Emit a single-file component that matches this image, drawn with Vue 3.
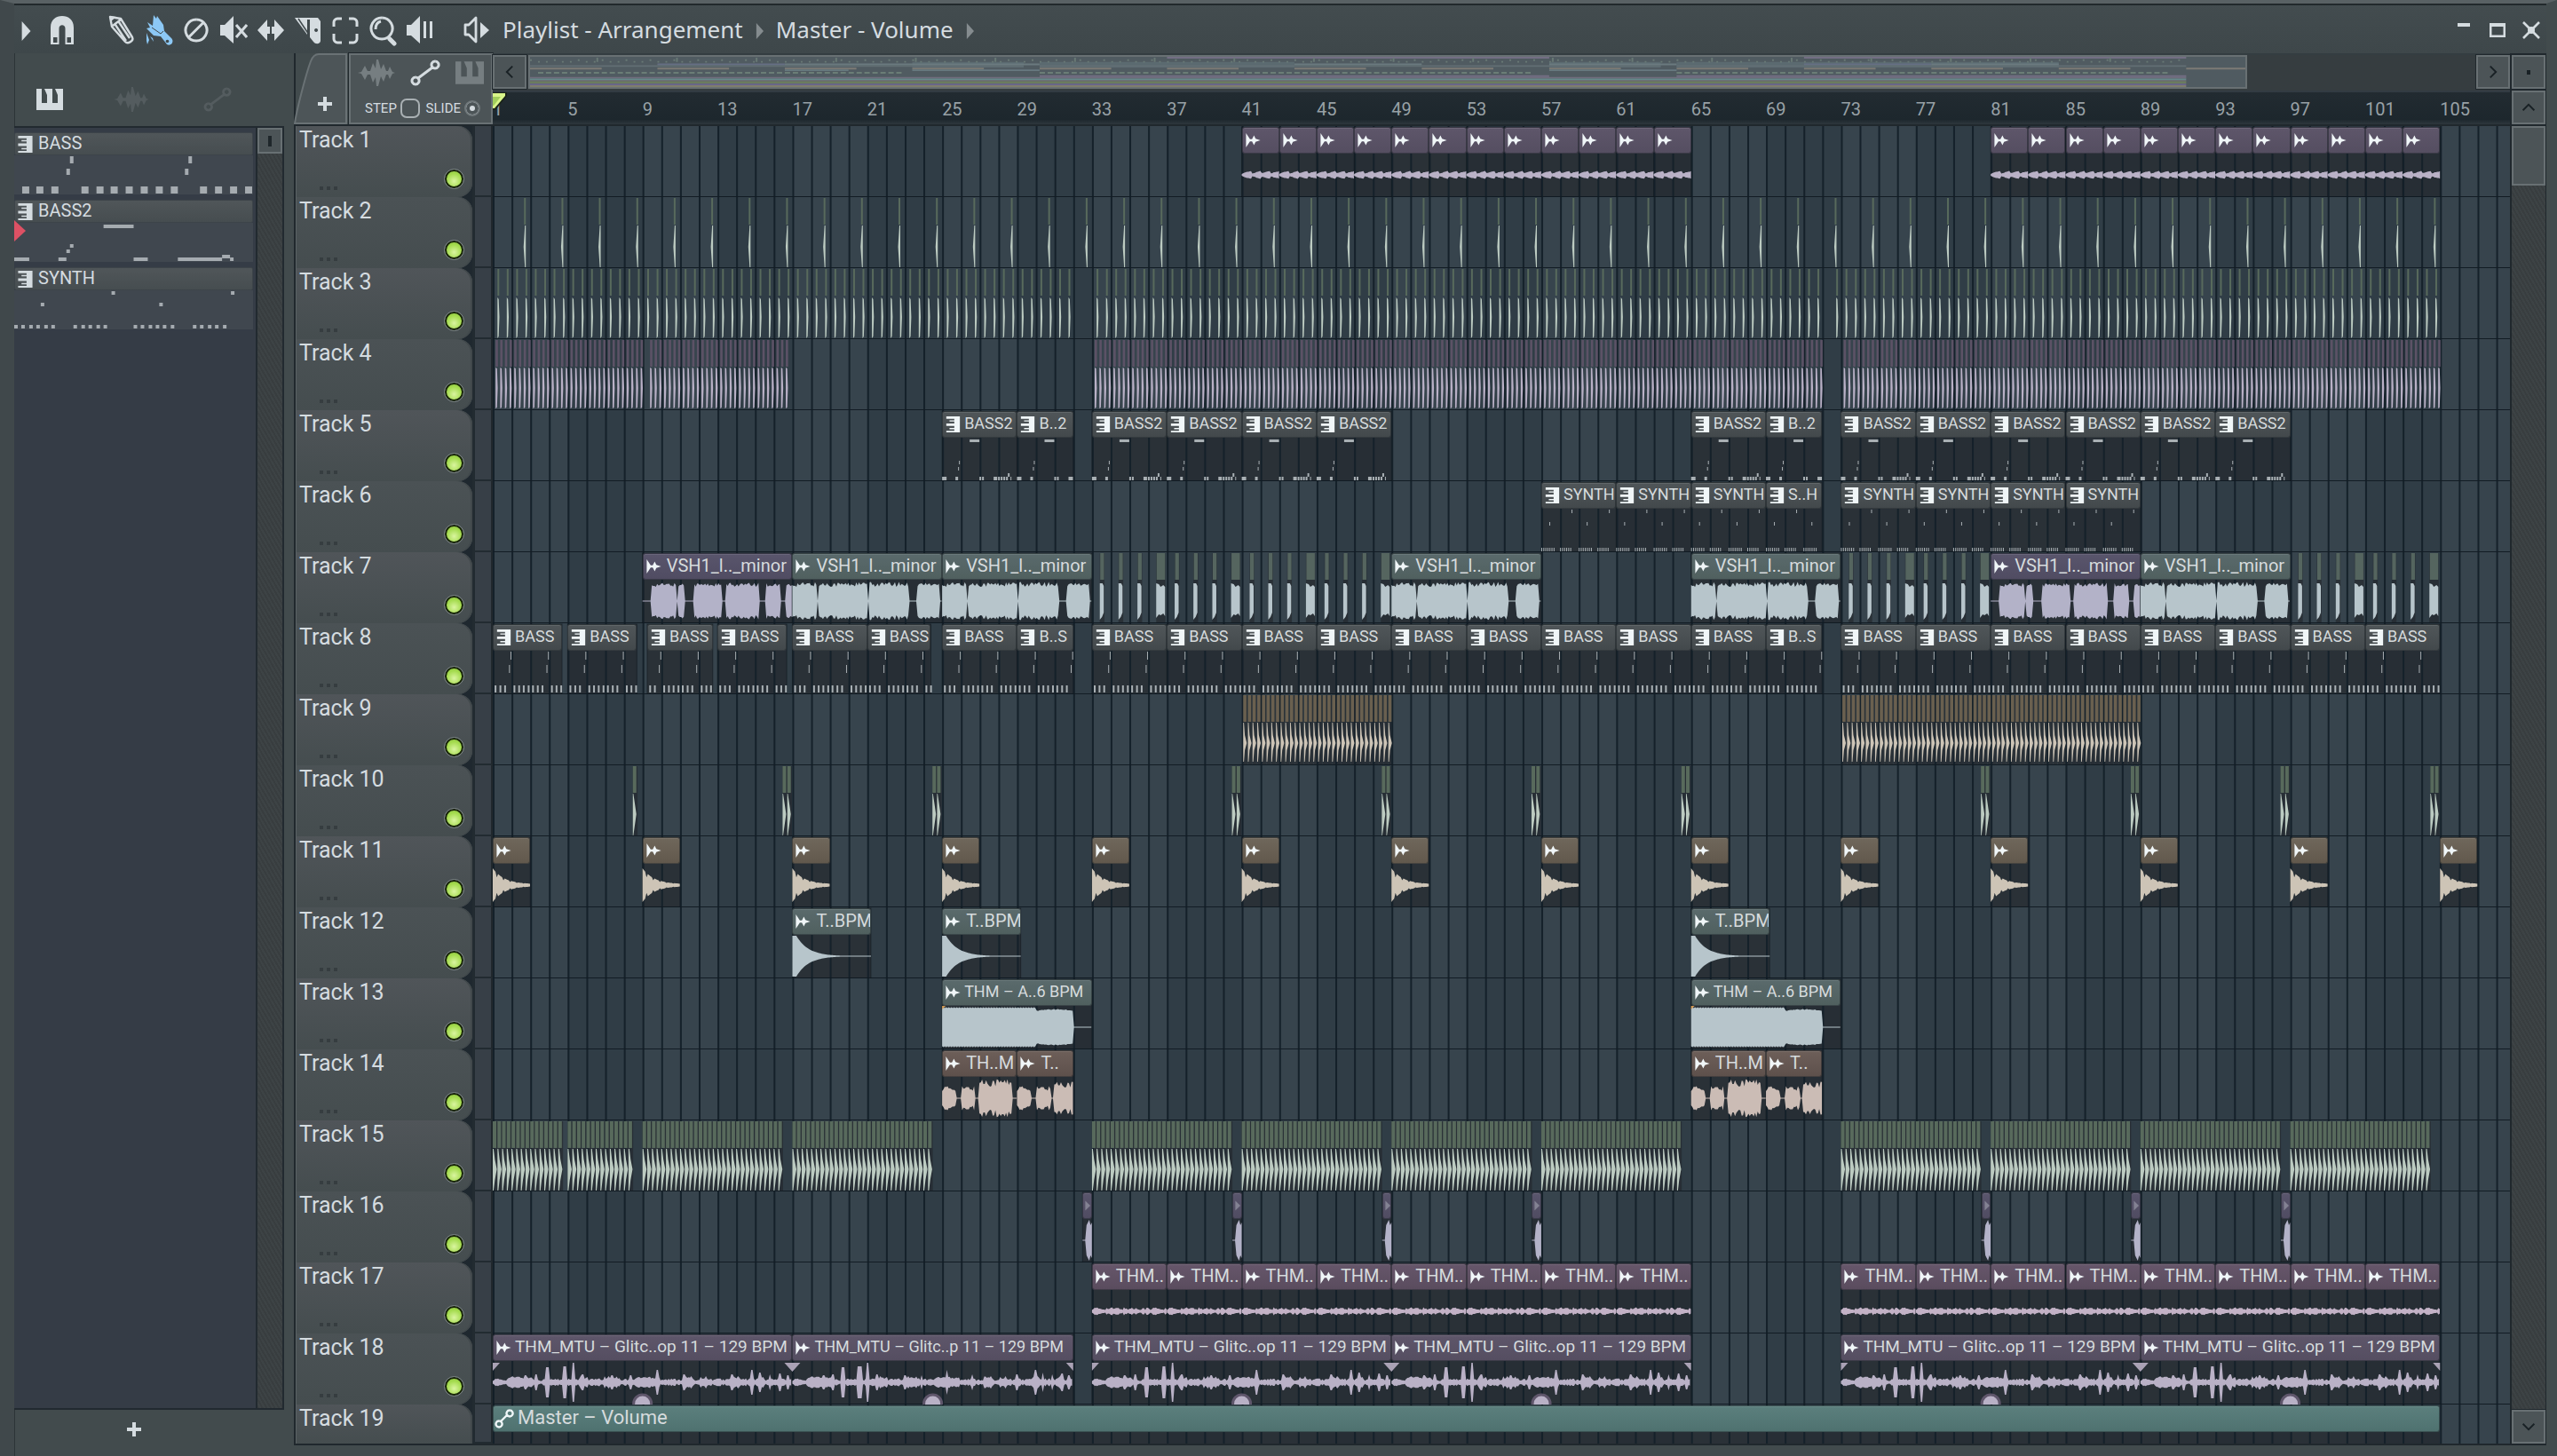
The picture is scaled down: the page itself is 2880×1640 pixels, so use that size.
<script setup>
const BAR = 21.08
const WIDTH = 2271
const round = n => Math.round(n * 10) / 10
const px = bar => round((bar - 1) * BAR)
const pct = bars => (bars * BAR / WIDTH * 100).toFixed(3) + '%'
const every = (from, to, step) => {
  const out = []
  for (let b = from; b < to - 0.01; b += step) out.push(b)
  return out
}
const noise = n => {
  const s = Math.sin(n * 127.1) * 43758.5453
  return s - Math.floor(s)
}
const box = (x, y, w, h) => `M${round(x)} ${y}h${round(w)}v${h}h${round(-w)}z`

// outline of a mirrored waveform; amp receives the position (0..1) and a sample number
function wave(bar, len, amp, step = 1.5) {
  const x0 = px(bar)
  const w = len * BAR
  const up = []
  const down = []
  for (let i = 0; i * step <= w; i++) {
    const a = Math.max(0.5, amp(i * step / w, i))
    up.push(`${round(x0 + i * step)} ${round(55 - a)}`)
    down.unshift(`${round(x0 + i * step)} ${round(55 + a)}`)
  }
  return `M${up.join('L')}L${down.join('L')}z`
}
const within = (t, ranges) => ranges.some(([a, b]) => t >= a && t <= b)
const vocalA = [[0.06, 0.225], [0.232, 0.28], [0.34, 0.525], [0.56, 0.78], [0.82, 0.92], [0.955, 1]]
const vocalB = [[0, 0.168], [0.174, 0.5], [0.515, 0.605], [0.612, 0.78], [0.83, 0.985]]
const spikes = [[0.11, 8], [0.145, 9], [0.178, 17], [0.185, 17], [0.236, 18], [0.244, 18], [0.268, 22], [0.3, 9], [0.4, 8], [0.46, 8], [0.55, 14], [0.64, 9], [0.8, 9], [0.865, 14], [0.892, 11], [0.925, 9], [0.96, 10], [0.985, 8]]
const shapes = {
  pulse: (t, i) => 1 + ((t * 4) % 1) * 3 + noise(i) * 0.8,
  vocalA: (t, i) => within(t, vocalA) ? 16 + noise(i) * 4.5 : 0.5,
  vocalB: (t, i) => within(t, vocalB) ? 16 + noise(i + 7) * 5.5 : 0.5,
  pluck: (t, i) => 20 * Math.exp(-t * 3.2) * (i % 5 === 3 ? 0.55 : 0.9) + 1,
  boom: t => t < 0.06 ? 23 : 23 * Math.exp(-(t - 0.05) * 6.5),
  pad: (t, i) => t < 0.63 ? 21.5 + (i % 2) : t < 0.88 ? 18 + 1.5 * Math.sin((t - 0.63) * 12) + noise(i) : 0.5,
  chopA: (t, i) => within(t, [[0, 0.19], [0.25, 0.44]]) ? 8 + noise(i) * 6 : within(t, [[0.49, 0.93]]) ? 13 + noise(i) * 10 : 0.5,
  chopB: (t, i) => within(t, [[0, 0.25], [0.34, 0.6]]) ? 8 + noise(i) * 6 : t > 0.66 ? 12 + noise(i) * 8 : 0.5,
  burst: (t, i) => t < 0.38 ? 0.5 : 17 + (i % 3) * 3,
  hum: (t, i) => 1.4 + noise(i % 44) * 3.2,
  glitch: (t, i) => {
    const hit = spikes.find(s => Math.abs(s[0] - t) < 0.0042)
    return hit ? hit[1] : 1.6 + noise(i) * 3 + (noise(Math.floor(i / 6)) > 0.6 ? 2.4 : 0)
  },
}

function bassNotes(bar, len) {
  let d = ''
  const start = Math.floor(bar)
  for (let p = 0; p < len + 0.5; p += 2) {
    for (const o of [0.1, 0.36, 0.61, 1.11, 1.36, 1.61, 1.87]) {
      const at = start + p + o
      if (at >= bar && at < bar + len) d += box(px(at), 70, 2, 8)
    }
    if (start + p + 0.95 < bar + len) d += box(px(start + p + 0.95), 32, 1, 9) + box(px(start + p + 0.87), 47, 1, 9)
  }
  return d
}
function bass2Notes(bar, len) {
  const x = px(bar)
  let d = box(x + 31, 33, 11, 3) + box(x + 19, 57, 1, 4) + box(x + 18, 64, 1, 4)
  const low = [[0, 5], [15, 3], [42, 2], [45, 2]]
  if (len > 3) low.push([58, 4], [63, 2], [66, 2], [69, 2], [72, 2], [77, 1])
  else low.push([58, 5])
  low.forEach(([o, w]) => { d += box(x + o, 75, w, 4) })
  return len > 3 ? d + box(x + 74, 71, 2, 4) : d
}
function synthNotes(bar, len) {
  let d = ''
  for (let b = 0; b < len; b++) {
    const x = px(bar + b)
    for (let n = 0; n < (b % 2 ? 6 : 7); n++) d += box(x + n * 2.3, 75, 1, 4)
    if (b % 2 === 0) d += box(x + 9, 46, 1, 4)
    if (b % 2 === 0 && b + 1.5 < len) d += box(x + 34, 32, 1, 4)
  }
  return d
}
const painters = { bass: bassNotes, bass2: bass2Notes, synth: synthNotes }

// clip: [start bar, length, label, tone, shape]
const set = (starts, len, label, tone, shape) => starts.map(b => [b, len, label, tone, shape])
const vsh = (b, tone) => [b, 8, 'VSH1_l.._minor', tone, tone === 'violet' ? 'vocalA' : 'vocalB']
const glitchA = 'THM_MTU – Glitc..op 11 – 129 BPM'
const glitchB = 'THM_MTU – Glitc..p 11 – 129 BPM'
const clipsByTrack = {
  1: [...set(every(41, 65, 2), 2, '', 'mauve', 'pulse'), ...set(every(81, 105, 2), 2, '', 'mauve', 'pulse')],
  5: [...set([25, 33, 37, 41, 45, 65, 73, 77, 81, 85, 89, 93], 4, 'BASS2', 'grey', 'bass2'), ...set([29, 69], 3, 'B..2', 'grey', 'bass2')],
  6: [...set([57, 61, 65, 73, 77, 81, 85], 4, 'SYNTH', 'grey', 'synth'), [69, 3, 'S..H', 'grey', 'synth']],
  7: [vsh(9, 'violet'), vsh(17, 'sage'), vsh(25, 'sage'), vsh(49, 'sage'), vsh(65, 'sage'), vsh(81, 'violet'), vsh(89, 'sage')],
  8: [[1, 3.7, 'BASS', 'grey', 'bass'], [5, 3.7, 'BASS', 'grey', 'bass'], [9.25, 3.5, 'BASS', 'grey', 'bass'], [13, 3.7, 'BASS', 'grey', 'bass'],
    [17, 4, 'BASS', 'grey', 'bass'], [21, 3.4, 'BASS', 'grey', 'bass'], [25, 4, 'BASS', 'grey', 'bass'], [29, 3, 'B..S', 'grey', 'bass'],
    ...set([...every(33, 69, 4), ...every(73, 105, 4)], 4, 'BASS', 'grey', 'bass'), [69, 3, 'B..S', 'grey', 'bass']],
  11: set(every(1, 106, 8), 2, '', 'sand', 'pluck'),
  12: set([17, 25, 65], 4.2, 'T..BPM', 'sage', 'boom'),
  13: set([25, 65], 8, 'THM – A..6 BPM', 'sage', 'pad'),
  14: [...set([25, 65], 4, 'TH..M', 'rust', 'chopA'), ...set([29, 69], 3, 'T..', 'rust', 'chopB')],
  16: set([32.5, 40.5, 48.5, 56.5, 80.5, 88.5, 96.5], 0.5, null, 'violet', 'burst'),
  17: set([...every(33, 65, 4), ...every(73, 105, 4)], 4, 'THM..', 'plum', 'hum'),
  18: [[1, 16, glitchA, 'mauve', 'glitch'], [17, 15, glitchB, 'mauve', 'glitch'], ...set([33, 49, 73, 89], 16, glitchA, 'mauve', 'glitch')],
  19: [[1, 104, 'Master – Volume', 'teal', 'none']],
}

// short one-shot hits that repeat at a fixed step: [from, to, step]
const hitsByTrack = {
  2: { tone: 'moss', ranges: [[2.67, 105, 2]], w: 2, draw: x => `M${round(x + 1)} 32h1v47h-1l-1.5-23z` },
  3: { tone: 'moss', ranges: [[1.25, 31.9, 0.5], [33.25, 71.9, 0.5], [72.75, 104.9, 0.5]], w: 2, draw: x => `M${round(x)} 33l1.4 2 .8 20 -.8 22 -1.4 2z` },
  4: { tone: 'plum', ranges: [[1.15, 9, 0.25], [9.4, 16.9, 0.25], [33.15, 72, 0.25], [73.15, 105, 0.25]], w: 2.6, draw: x => `M${round(x)} 32l1.6 1 .8 22 -.8 22 -1.6 1z` },
  9: { tone: 'sand', ranges: [[41.08, 49, 0.25], [73.08, 89, 0.25]], w: 3.6, draw: x => `M${round(x)} 32h.8l1 14 2.2 9 -2.2 8 -1 13h-.8z` },
  10: { tone: 'moss', ranges: [[8.48, 8.6, 0.25], ...[16.48, 24.48, 40.48, 48.48, 56.48, 64.48, 80.48, 88.48, 96.48, 104.48].map(b => [b, b + 0.4, 0.25])], w: 4, draw: x => `M${round(x)} 32h.6l3.4 23 -3.4 24h-.6z` },
  15: { tone: 'moss', ranges: [[1, 4.7, 0.25], [5, 8.45, 0.25], ...[9, 17, 33, 41, 49, 57, 73, 81, 89, 97].map(b => [b, b + 7.45, 0.25])], w: 4, draw: x => `M${round(x)} 32h1l1.4 12 2.2 11 -2.2 12 -1.4 12h-1z` },
}
const waveTone = { mauve: '#b9b1c6', violet: '#b3b2c8', sage: '#b7c5cb', sand: '#cdc4b6', rust: '#cbbcb5', plum: '#c3b2c6', moss: '#bccbc1', grey: '#a9b0b4', teal: '#fff' }
const headTone = { moss: '#586a5c', plum: '#5c5266', sand: '#6a604f', sage: '#55655f' }

const tracks = Array.from({ length: 19 }, (_, i) => {
  const n = i + 1
  const clips = (clipsByTrack[n] || []).map(([bar, len, label, tone, shape]) => ({
    bar, len, label, tone, shape,
    icon: label === null ? 'fold' : tone === 'grey' ? 'keys' : tone === 'teal' ? 'auto' : 'audio',
    art: shape === 'none' ? '' : painters[shape] ? painters[shape](bar, len) : wave(bar, len, shapes[shape]),
  }))
  const art = clips.map(c => ({ fill: waveTone[c.tone], d: c.art }))
  const shade = clips.map(c => box(px(c.bar), 1, c.len * BAR, 79)).join('')
  const extra = []
  let hitShade = ''
  if (hitsByTrack[n]) {
    const { tone, ranges, w, draw } = hitsByTrack[n]
    const xs = ranges.flatMap(r => every(...r)).map(px)
    extra.push({ fill: headTone[tone], d: xs.map(x => box(x, 1, w, 30)).join('') })
    art.push({ fill: n === 4 ? '#b9b0c6' : waveTone[tone], d: xs.map(draw).join('') })
    if (n === 9 || n === 15 || n === 10) hitShade = xs.map(x => box(x, 1, w + 1.3, 78)).join('')
  }
  if (n === 7) {
    const cuts = [33, 37, 41, 45, 73, 77, 97, 101].flatMap(b => [[b + 0.42, 0.25], [b + 1.42, 0.25], [b + 2.43, 0.25], [b + 3.43, 0.5]])
    hitShade = cuts.map(([b, l]) => box(px(b), 1, l * BAR, 78)).join('')
    extra.push({ fill: headTone.sage, d: cuts.map(([b, l]) => box(px(b) + 0.5, 1, l * BAR - 1, 30)).join('') })
    art.push({ fill: waveTone.sage, d: cuts.map(([b, l]) => l < 0.3 ? `M${px(b)} 35h3l1.5 3v30l-2 5 -2.5 3z` : `M${px(b)} 35l3 1 2 3 3-2 2 2v33l-2-3 -3 2 -2-1 -3 4z`).join('') })
  }
  if (n === 13) extra.push({ fill: '#d39a54', d: [25, 65].map(b => `M${px(b)} 31h4l-4 4z`).join('') })
  return { n, clips, art, shade, hitShade, extra }
})
const gridBlocks = every(5, 108, 8).map(b => ({ x: px(b), w: 4 * BAR }))
const barLines = every(1, 108.7, 1).map(px)
const labels = every(1, 106, 4)
const fades = [[1, 'l'], [17, 'm'], [32, 'r'], [33, 'l'], [49, 'm'], [65, 'r'], [73, 'l'], [89, 'm'], [105, 'r']].map(([b, k]) => {
  const x = px(b)
  return k === 'l' ? `M${x} 33h8l-8 9z` : k === 'r' ? `M${x} 33h-8l8 9z` : `M${x - 9} 33h18l-9 10z`
}).join('')
const handles = [9, 24.5, 41, 57, 81, 97].map(px)

const patterns = [
  { name: 'BASS', notes: [...[9, 25, 42, 76, 93, 109, 126, 143, 160, 177, 210, 227, 244, 261].map(x => [x, 35, 8, 8]), [63, 1, 4, 8], [59, 15, 4, 7], [197, 1, 4, 8], [193, 15, 4, 7]] },
  { name: 'BASS2', notes: [[101, 2, 34, 4], [63, 24, 4, 4], [59, 30, 4, 4], [0, 39, 17, 4], [50, 39, 9, 4], [135, 39, 16, 4], [185, 39, 50, 4], [235, 36, 9, 4], [244, 39, 4, 4]] },
  { name: 'SYNTH', notes: [[110, 1, 4, 4], [245, 1, 4, 4], [30, 14, 4, 4], [164, 14, 4, 4], ...[0, 8, 17, 25, 34, 42, 67, 76, 84, 93, 101, 135, 143, 152, 160, 168, 177, 202, 210, 219, 227, 236].map(x => [x, 39, 4, 4])] },
]

const tools = ['pencil', 'brush', 'ban', 'mute', 'slip', 'slice', 'select', 'zoom', 'playback']
const miniBar = 17.94
const miniDots = every(1, 105, 0.5).map((b, i) => box((b - 1) * miniBar, i % 3 ? 5 : 3, 2, 2) + (i % 10 === 8 ? box((b - 1) * miniBar + 3, 1, 2, 5) : '')).join('')
const miniRows = [
  { c: '#7f7590', y: 0, h: 2, r: [[41, 65], [81, 105]] },
  { c: '#5f6f76', y: 6, h: 7, r: [[25, 32], [33, 49], [65, 72], [73, 97]] },
  { c: '#6e7690', y: 8, h: 2, r: [[9, 17], [81, 89]] },
  { c: '#74858a', y: 8, h: 2, r: [[17, 33], [49, 57], [65, 73], [89, 97]] },
  { c: '#68767b', y: 10, h: 2, r: [[1, 32], [33, 72], [73, 105]] },
  { c: '#8b857c', y: 13, h: 2, r: every(1, 106, 8).map(b => [b, b + 4.5]) },
  { c: '#6f838a', y: 15, h: 2, r: [[17, 21], [25, 33], [65, 73]] },
  { c: '#7f7590', y: 22, h: 2, r: [[33, 65], [73, 105]] },
  { c: '#7d7488', y: 24, h: 2, r: [[1, 105]] },
  { c: '#6d9a98', y: 26, h: 2, r: [[1, 105]] },
  { c: '#8d7683', y: 28, h: 1, r: [[1, 105]] },
  { c: '#74885f', y: 29, h: 3, r: [[1, 105]] },
  { c: '#746a9c', y: 32, h: 2, r: [[1, 105]] },
  { c: '#8f8a70', y: 34, h: 2, r: [[1, 105]] },
].map(m => ({ c: m.c, d: m.r.map(([a, b]) => box((a - 1) * miniBar, m.y, (b - a) * miniBar, m.h)).join('') }))
const miniDash = every(1, 105, 0.5).filter(b => (b > 1 && b < 24.4) || (b >= 33 && b < 64) || (b >= 73 && b < 104)).map(b => box((b - 1) * miniBar, 18, 6, 2)).join('')
</script>

<template>
  <svg class="sprite" aria-hidden="true">
    <symbol id="audio" viewBox="0 0 18 20"><path fill="currentColor" d="M0 1l5 7.500h2.500L10 4l2 4 6 2-6 2-2 4-2.500-4.500H5L0 19z" /></symbol>
    <symbol id="keys" viewBox="0 0 17 20"><path fill="currentColor" d="M0 0h17v20H0v-2h10v-2H4v-1.500h6V12H0v-3h10V6.500H4V5h6V3H0z" /></symbol>
    <symbol id="auto" viewBox="0 0 22 22"><path fill="none" stroke="currentColor" stroke-width="2.400" d="M7 14l8-8M5 13.500a3.500 3.500 0 1 0 .1 0M17 1.500a3.500 3.500 0 1 0 .1 0" /></symbol>
    <symbol id="fold" viewBox="0 0 10 18"><path fill="currentColor" opacity=".3" d="M3 2l7 7-7 7z" /></symbol>
    <symbol id="piano" viewBox="0 0 30 24"><path fill="currentColor" d="M0 0h6v16h6V7l-3-7h1l2 0h6l0 0v16h6V7l-3-7h1 8v24H0z" /></symbol>
    <symbol id="bigwave" viewBox="0 0 42 30"><path fill="currentColor" d="M0 15l4-1 4-7 3 6 3 0 3-9 3 6 1-10 2 0 3 11 3-6 3 8 2 0 2-5 3 6 3 1-3 1-3 6-2-5-2 0-3 8-3-6-3 11-2 0-1-10-3 6-3-9-3 0-3 6-4-7z" /></symbol>
    <symbol id="link" viewBox="0 0 32 30"><path fill="none" stroke="currentColor" stroke-width="3" d="M8 21L24 9M5 20a4 4 0 1 0 .1 0M27 2a4 4 0 1 0 .1 0" /></symbol>
    <symbol id="magnet" viewBox="0 0 30 36"><path fill="currentColor" fill-rule="evenodd" d="M2 34V15C2 6 8 2 15 2s13 4 13 13v19H18.500V16c0-5-7-5-7 0v18zM5 26v6h4.500v-6zM20.500 26v6H25v-6z" /></symbol>
    <symbol id="pencil" viewBox="0 0 32 36"><path fill="none" stroke="currentColor" stroke-width="2.400" stroke-linejoin="round" d="M3 3l12 2 13 21c2 4-5 8-8 5L5 14zM3 3l2 11M9 12l12 18M15 6L6 13M13 9l12 18" /><path fill="currentColor" d="M2 2l8 1-6 5z" /></symbol>
    <symbol id="brush" viewBox="0 0 32 36"><path fill="currentColor" d="M10 1l3 4 1-3 7 10 1 7 8 8c4 4-1 10-5 7l-7-9-8-1-8-8 4-1-3-6 6 4zM2 21l3 8-2 5-1-4zM6 25l3 2 1 4z" /><circle cx="25.500" cy="30.500" r="1.800" fill="#40494c" /><path d="M8 15l10 7 3-3" fill="none" stroke="#40494c" stroke-width="1" /></symbol>
    <symbol id="ban" viewBox="0 0 32 36"><path fill="none" stroke="currentColor" stroke-width="3" d="M16 6a12 12 0 1 0 .1 0M7.500 26L24.500 9" /></symbol>
    <symbol id="mute" viewBox="0 0 32 36"><path fill="currentColor" d="M1 12h5L16 2v31L6 24H1z" /><path fill="none" stroke="currentColor" stroke-width="3" d="M19 12l12 14M31 12L19 26" /></symbol>
    <symbol id="slip" viewBox="0 0 32 36"><path fill="currentColor" d="M1 18L12 6v8h3v8h-3v8zM31 18L20 6v8h-3v8h3v8z" /></symbol>
    <symbol id="slice" viewBox="0 0 32 36"><path fill="currentColor" fill-rule="evenodd" d="M1 4h26l3 4v22c0 3-5 5-8 1l-4-5V6h-3v17zM25 16a2 2 0 1 0 .1 0" /><path d="M5 5l12 18" stroke="#40494c" stroke-width="1.500" /></symbol>
    <symbol id="select" viewBox="0 0 32 36"><path fill="none" stroke="currentColor" stroke-width="3" d="M12 5H7c-2 0-4 2-4 4v5M20 5h5c2 0 4 2 4 4v5M3 22v6c0 2 2 4 4 4h5M29 22v6c0 2-2 4-4 4h-5" /></symbol>
    <symbol id="zoom" viewBox="0 0 32 36"><path fill="none" stroke="currentColor" stroke-width="3" d="M15 4a12 12 0 1 0 .1 0M8 17c0-5 2-8 6-9" /><path stroke="currentColor" stroke-width="5" stroke-linecap="round" d="M24 28l5 5" /></symbol>
    <symbol id="playback" viewBox="0 0 32 36"><path fill="currentColor" d="M1 12h5L16 2v31L6 24H1zM20 8h3v19h-3zM27 8h3v19h-3z" /></symbol>
    <symbol id="speaker" viewBox="0 0 32 36"><path fill="none" stroke="currentColor" stroke-width="2.800" stroke-linejoin="round" d="M3 12h4l8-8v27l-8-8H3z" /><path fill="currentColor" d="M20 9l10 9-10 9z" /></symbol>
    <symbol id="plus" viewBox="0 0 18 18"><path fill="currentColor" d="M7 1h4v6h6v4h-6v6H7v-6H1V7h6z" /></symbol>
    <symbol id="chevron" viewBox="0 0 20 20"><path fill="none" stroke="currentColor" stroke-width="2.400" d="M14 2L6 10l8 8" /></symbol>
    <symbol id="tri" viewBox="0 0 10 20"><path fill="currentColor" d="M1 0l9 10-9 10z" /></symbol>
  </svg>
  <div class="window">
    <header class="toolbar">
      <button class="tool tiny" aria-label="Menu"><svg class="tri"><use href="#tri" /></svg></button>
      <button class="tool magnet" aria-label="Snap"><svg><use href="#magnet" /></svg></button>
      <button v-for="t in tools" :key="t" class="tool" :class="{ active: t === 'brush' }" :aria-label="t"><svg><use :href="'#' + t" /></svg></button>
      <button class="tool speaker" aria-label="Preview"><svg><use href="#speaker" /></svg></button>
      <nav class="crumbs">
        <span>Playlist - Arrangement</span><svg class="tri"><use href="#tri" /></svg>
        <span>Master - Volume</span><svg class="tri"><use href="#tri" /></svg>
      </nav>
      <div class="winbtns">
        <button aria-label="Minimize"><svg viewBox="0 0 20 20"><path d="M3 2h14v4H3z" fill="currentColor" /></svg></button>
        <button aria-label="Maximize"><svg viewBox="0 0 20 20"><path d="M1 2h18v16H1zM3.500 6v9.500h13V6z" fill="currentColor" fill-rule="evenodd" /></svg></button>
        <button aria-label="Close"><svg viewBox="0 0 20 20"><path d="M1 1l18 18M19 1L1 19" stroke="currentColor" stroke-width="2.600" /><circle cx="10" cy="10" r="4" fill="currentColor" /></svg></button>
      </div>
    </header>

    <main class="body">
      <aside class="picker">
        <div class="tabs">
          <button aria-label="Patterns"><svg><use href="#piano" /></svg></button>
          <button class="off" aria-label="Audio clips"><svg><use href="#bigwave" /></svg></button>
          <button class="off" aria-label="Automation clips"><svg><use href="#link" /></svg></button>
        </div>
        <div class="picker-main">
          <ul class="patterns">
            <li v-for="p in patterns" :key="p.name">
              <div class="pat-name"><svg><use href="#keys" /></svg><span>{{ p.name }}</span></div>
              <svg class="pat-notes" viewBox="0 0 270 44" preserveAspectRatio="none">
                <rect v-for="(r, i) in p.notes" :key="i" :x="r[0]" :y="r[1]" :width="r[2]" :height="r[3]" fill="#a5abb0" />
              </svg>
            </li>
            <li class="marker" aria-hidden="true"></li>
          </ul>
          <div class="vbar"><div class="grip"></div></div>
        </div>
        <button class="add" aria-label="Add pattern"><svg><use href="#plus" /></svg></button>
      </aside>

      <section class="playlist">
        <div class="head">
          <button class="addtrack" aria-label="Add track">
            <svg class="tab-shape" viewBox="0 0 60 80"><path d="M1 79C3 64 14 22 19 9q3-8 9-8h31v78z" fill="#4d5558" stroke="#6a7275" stroke-width="2" /></svg>
            <svg class="plus"><use href="#plus" /></svg>
          </button>
          <div class="modes">
            <div class="mode-icons">
              <svg class="dim"><use href="#bigwave" /></svg>
              <svg><use href="#link" /></svg>
              <svg class="dim keys"><use href="#piano" /></svg>
            </div>
            <div class="mode-opts">
              <label>STEP<input type="checkbox"></label>
              <label>SLIDE<input type="radio" checked></label>
            </div>
          </div>
          <div class="timeline">
            <div class="hscroll">
              <button class="sq" aria-label="Scroll left"><svg><use href="#chevron" /></svg></button>
              <div class="rail">
                <svg class="mini" viewBox="0 0 1932 36" preserveAspectRatio="none">
                  <g opacity=".75">
                    <path v-for="(m, i) in miniRows" :key="i" :d="m.d" :fill="m.c" />
                    <path :d="miniDots" fill="#71837c" />
                    <path :d="miniDash" fill="#74897d" />
                  </g>
                </svg>
              </div>
              <button class="sq flip" aria-label="Scroll right"><svg><use href="#chevron" /></svg></button>
            </div>
            <div class="ruler">
              <span v-for="b in labels" :key="b" :style="{ left: pct(b - 1) }">{{ b }}</span>
              <svg class="playhead" viewBox="0 0 16 20"><path d="M0 0h16v4L3 20H0z" fill="#1a2218" /><path d="M0 1h14v3L2 18H0z" fill="#d9f58a" /><path d="M0 5h9L1 15H0z" fill="#a3cf5c" /></svg>
            </div>
          </div>
          <div class="corner">
            <button class="sq" aria-label="Scroll mode"><i></i></button>
            <button class="sq up" aria-label="Scroll up"><svg><use href="#chevron" /></svg></button>
          </div>
        </div>

        <div class="tracks-wrap">
          <div class="tracks">
            <div v-for="t in tracks" :key="t.n" class="track" :class="{ even: t.n % 2 === 0, last: t.n === 19 }">
              <div class="thead">
                <span class="tname">Track {{ t.n }}</span>
                <span v-if="t.n < 19" class="dots"><i></i><i></i><i></i></span>
                <input v-if="t.n < 19" class="led" type="checkbox" checked :aria-label="'Enable track ' + t.n">
              </div>
              <div class="gutter"></div>
              <div class="lane">
                <svg class="art" :viewBox="'0 0 ' + WIDTH + ' 80'" preserveAspectRatio="none">
                  <rect :width="WIDTH" height="80" fill="#37444d" />
                  <rect v-for="g in gridBlocks" :key="g.x" :x="g.x" :width="g.w" height="80" fill="#303d46" />
                  <path :d="t.shade + t.hitShade" fill="rgba(34,36,42,.6)" />
                  <rect v-for="x in barLines" :key="x" :x="x" width="2" height="80" fill="#15212a" />
                  <rect v-if="t.n < 19" y="79" :width="WIDTH" height="1" fill="#121c24" />
                  <path v-if="t.n < 19" :d="t.shade" fill="none" stroke="#0d151b" stroke-opacity=".5" stroke-width="1" />
                  <path v-for="(a, i) in t.art" :key="i" :d="a.d" :fill="a.fill" />
                  <path v-for="(a, i) in t.extra" :key="'e' + i" :d="a.d" :fill="a.fill" />
                  <template v-if="t.n === 18">
                    <path :d="fades" fill="#aaa2b5" />
                    <circle v-for="h in handles" :key="h" :cx="h" cy="79" r="10" fill="#b9b1c6" stroke="#5f566b" stroke-width="3" />
                  </template>
                </svg>
                <div v-for="c in t.clips" :key="c.bar" class="clip" :class="[c.tone, c.icon, c.shape, { short: c.len === 15 }]" :style="{ left: pct(c.bar - 1), width: pct(c.len) }">
                  <svg><use :href="'#' + c.icon" /></svg><span v-if="c.label">{{ c.label }}</span>
                </div>
              </div>
            </div>
          </div>
          <div class="vscroll">
            <div class="thumb"></div>
            <button class="sq down" aria-label="Scroll down"><svg><use href="#chevron" /></svg></button>
          </div>
        </div>
      </section>
    </main>
  </div>
</template>

<style>
body { margin: 0; background: #434c4f; }
</style>

<style scoped>
* { box-sizing: border-box; }
button, input { appearance: none; margin: 0; padding: 0; border: 0; background: none; color: inherit; font: inherit; }
svg { display: block; }
.sprite { position: absolute; width: 0; height: 0; }
.window { min-height: 100vh; display: flex; flex-direction: column; background: #424b4d; color: #d5dce0; font-family: Roboto, "Noto Sans", sans-serif; border-top: 4px solid #596164; border-left: 16px solid #40484b; border-right: 12px solid #424b4d; box-shadow: inset 0 2px 0 #22292c, inset 1px 0 0 #2c3437; }
.toolbar { display: flex; align-items: center; height: 56px; padding: 4px 7px 0 7px; background: linear-gradient(#434c4f, #3e474a); box-shadow: inset 0 2px 0 #22292c; }
.tool { width: 42px; height: 36px; }
.tool svg { width: 32px; height: 36px; }
.tool.tiny { width: 31px; padding-top: 2px; }
.tool .tri { width: 12px; height: 22px; }
.tool.magnet { width: 67px; }
.tool.active { color: #8cc8f5; }
.tool.speaker { width: 45px; margin-left: 22px; }
.crumbs { display: flex; align-items: center; gap: 14px; font-family: "Noto Sans", sans-serif; font-size: 26px; line-height: 34px; padding-bottom: 2px; }
.crumbs .tri { width: 9px; height: 18px; color: #858c8f; margin-top: 4px; }
.winbtns { margin-left: auto; display: flex; gap: 18px; }
.winbtns svg { width: 20px; height: 20px; }

.body { flex: 1; display: flex; gap: 13px; padding-bottom: 14px; }
.picker { width: 304px; display: flex; flex-direction: column; }
.tabs { height: 82px; display: flex; justify-content: space-between; align-items: center; padding: 22px 54px 0 24px; }
.tabs svg { width: 32px; height: 24px; }
.tabs .off { color: #545c5f; }
.tabs .off svg { width: 42px; height: 28px; }
.picker-main { flex: 1; display: flex; border: 2px solid #222a30; border-left: 0; }
.patterns { flex: 1; margin: 0; padding: 5px 3px 0 0; list-style: none; background: #353c46; position: relative; }
.patterns li { height: 76px; }
.pat-name { display: flex; align-items: center; gap: 6px; height: 26px; padding-left: 3px; font-size: 20px; line-height: 20px; background: linear-gradient(#505659, #464d50); border: 1px solid #3d4449; border-radius: 2px; }
.pat-name svg { width: 17px; height: 19px; }
.pat-name span { padding-bottom: 2px; }
.pat-notes { width: 100%; height: 44px; background: #40474f; }
.patterns .marker { position: absolute; left: 0; top: 104px; width: 13px; height: 24px; background: #dd5164; clip-path: polygon(0 0, 100% 50%, 0 100%); }
.vbar { width: 30px; border-left: 2px solid #222a30; background: repeating-linear-gradient(60deg, #383d3f 0 2px, #3d4345 2px 4px); }
.grip { height: 29px; border: 2px solid #687073; background: #4c5457; display: flex; }
.grip::after { content: ""; width: 4px; height: 12px; margin: auto; background: #1f272b; }
.add { height: 40px; align-self: center; width: 36px; margin-right: 34px; padding-top: 4px; }
.add svg { width: 18px; height: 18px; margin: 0 auto; }

.playlist { flex: 1; min-width: 0; display: flex; flex-direction: column; border-left: 2px solid #20282d; border-bottom: 2px solid #20282d; margin-left: -2px; }
.head { height: 82px; display: flex; border-bottom: 2px solid #20282d; margin-left: -2px; }
.addtrack { position: relative; width: 62px; }
.tab-shape { width: 60px; height: 80px; }
.addtrack .plus { position: absolute; left: 26px; top: 48px; width: 18px; height: 18px; }
.modes { width: 162px; padding: 4px 8px; border: 2px solid #697174; outline: 1px solid #20282d; background: #4c5457; }
.mode-icons { display: flex; justify-content: space-between; height: 32px; align-items: center; }
.mode-icons svg { width: 34px; height: 30px; }
.mode-icons .dim { color: #767e81; width: 42px; }
.mode-icons .dim.keys { width: 32px; height: 26px; }
.mode-opts { display: flex; justify-content: space-between; align-items: center; height: 44px; padding: 4px 4px 0 8px; font-size: 15px; }
.mode-opts label { display: flex; align-items: center; gap: 4px; }
.mode-opts input { width: 22px; height: 22px; border: 2px solid #a9b0b3; border-radius: 7px; }
.mode-opts input[type="radio"] { width: 18px; height: 18px; border: 2px solid #70787b; border-radius: 50%; background: #d5dce0; box-shadow: inset 0 0 0 4px #4c5457; }
.timeline { flex: 1; min-width: 0; }
.hscroll { display: flex; gap: 2px; height: 42px; border-top: 2px solid #343d41; background: #363d40; }
.sq { width: 38px; height: 38px; border: 2px solid #687073; background: #4c5457; color: #192125; display: grid; place-items: center; outline: 1px solid #20282d; }
.sq svg { width: 16px; height: 20px; }
.flip svg { transform: rotate(180deg); }
.up svg { transform: rotate(90deg); }
.down svg { transform: rotate(-90deg); }
.rail { flex: 1; }
.mini { width: 88.3%; height: 38px; border: 2px solid #687073; background: #505b61; }
.ruler { position: relative; height: 38px; border-top: 2px solid #323b43; background: linear-gradient(#222b31, #1d272d 85%, #2e373d); font-size: 20px; line-height: 38px; color: #98a1a6; }
.ruler span { position: absolute; top: 0; }
.playhead { position: absolute; left: 0; top: 0; width: 16px; height: 20px; }
.corner { width: 41px; display: flex; flex-direction: column; gap: 2px; padding: 2px 0 0 2px; background: #20282d; }
.corner i { width: 4px; height: 5px; background: #192125; }

.tracks-wrap { display: flex; flex: 1; }
.tracks { flex: 1; min-width: 0; }
.track { display: flex; height: 80px; background: #1f282f; }
.track.last { height: 44px; overflow: hidden; }
.thead { width: 199px; position: relative; padding: 0 3px; border-left: 1px solid #5a6265; border-radius: 0 16px 16px 0; background: linear-gradient(#505559, #454d4f); box-shadow: inset -2px 0 0 #41484b; }
.even .thead { background: linear-gradient(#4b5255, #454d4f); }
.last .thead { border-radius: 0 16px 0 0; }
.tname { font-size: 25px; line-height: 32px; }
.dots { position: absolute; left: 26px; bottom: 8px; display: flex; gap: 4px; }
.dots i { width: 4px; height: 4px; background: #363d40; }
.led { position: absolute; right: 10px; bottom: 10px; width: 21px; height: 21px; border-radius: 50%; background: radial-gradient(circle at 50% 65%, #daf5a0, #a4db4e 60%, #8cc43c); border: 2px solid #182509; outline: 1px solid #7d8588; }
.gutter { width: 23px; border-left: 3px solid #222b31; border-right: 2px solid #20282d; border-bottom: 2px solid #222b31; background: #373f47; }
.lane { position: relative; flex: 1; min-width: 0; overflow: hidden; }
.art { width: 100%; height: 80px; }
.clip { position: absolute; top: 1px; height: 30px; display: flex; align-items: center; gap: 6px; padding-left: 3px; border-radius: 3px; overflow: hidden; white-space: nowrap; font-size: 20px; line-height: 24px; border: 1px solid rgba(20, 26, 30, .45); box-shadow: inset 0 1px 0 rgba(255, 255, 255, .1); color: #d6dbdd; }
.clip svg { flex: none; width: 17px; height: 18px; color: #f0f6f8; }
.clip span { padding-bottom: 2px; }
.clip.glitch { font-size: 19px; gap: 4px; }
.clip.keys, .clip.pad, .clip.short { font-size: 18px; gap: 4px; }
.clip.auto { padding-left: 1px; gap: 4px; font-size: 22px; }
.clip.auto svg { width: 22px; height: 22px; }
.clip.fold { padding-left: 0; }
.clip.fold svg { width: 8px; }
.grey { background: linear-gradient(#505659, #43494c); }
.mauve { background: linear-gradient(#5e566a, #554e61); }
.violet { background: linear-gradient(#59556c, #504c62); }
.sage { background: linear-gradient(#5a6a6c, #50605f); }
.sand { background: linear-gradient(#6f675b, #62594d); }
.rust { background: linear-gradient(#6d5f59, #5e514c); }
.plum { background: linear-gradient(#66566a, #5a4c5e); }
.teal { background: linear-gradient(#5b7f7d, #4f7270); }
.vscroll { width: 41px; display: flex; flex-direction: column; padding-left: 2px; border-right: 1px solid #20282d; border-left: 2px solid #20282d; background: repeating-linear-gradient(60deg, #383d3f 0 2px, #3d4345 2px 4px); }
.thumb { height: 67px; width: 38px; border: 2px solid #687073; background: #4c5457; margin-left: -2px; }
.vscroll .down { margin-top: auto; margin-left: -2px; }
</style>
